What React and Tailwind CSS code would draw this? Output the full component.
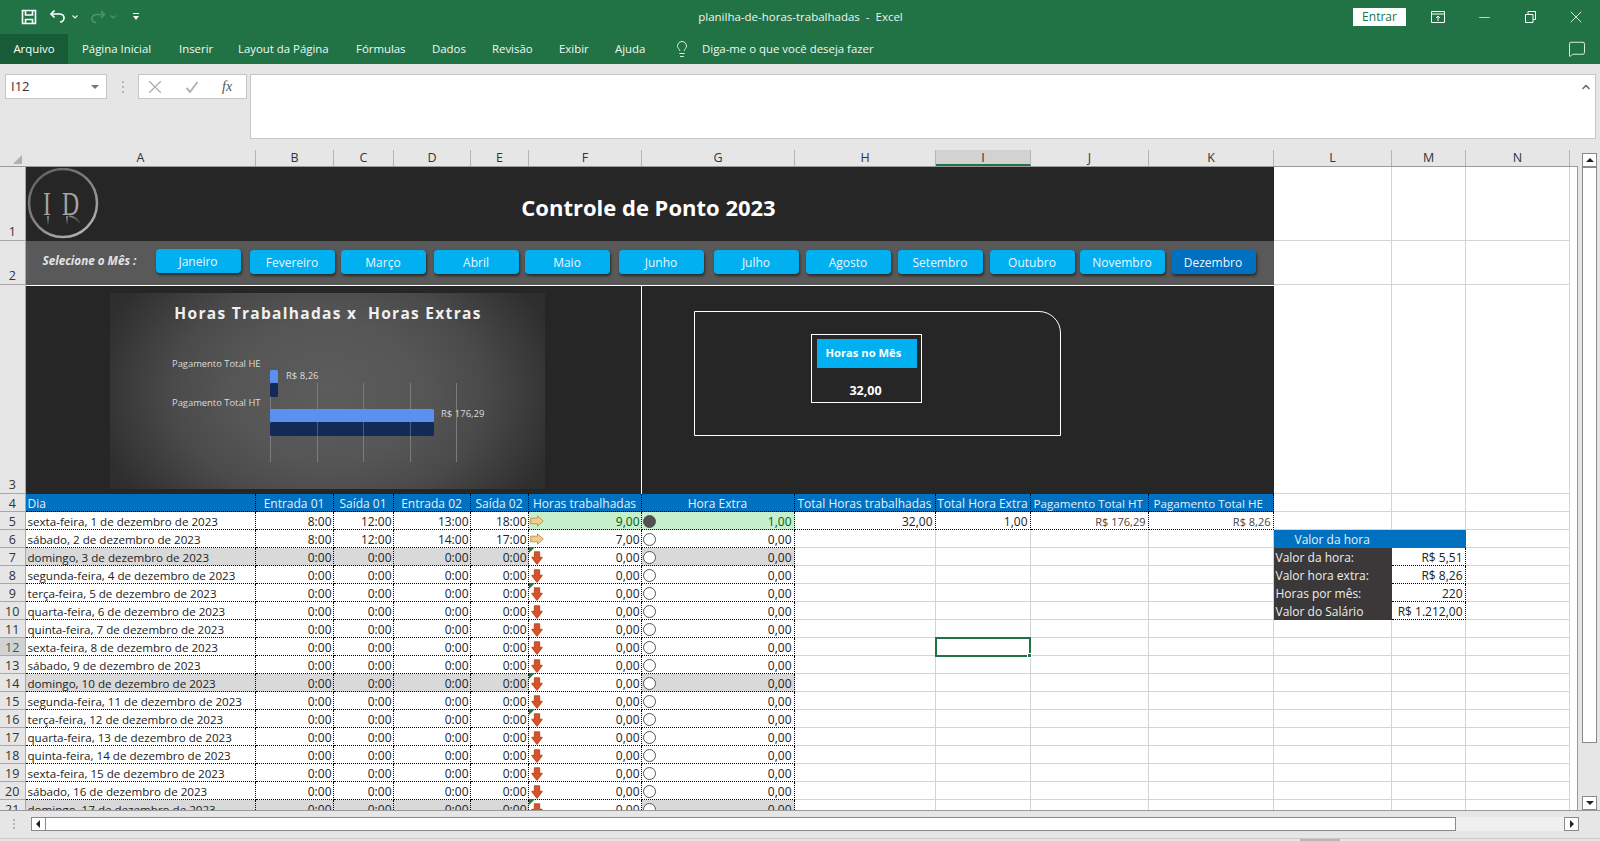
import { ChevronUp, Lightbulb, MessageSquare, Minus, X } from 'lucide-react'

const FONT = 'font-["Open_Sans",sans-serif]'

const TABS = [
  { label: 'Página Inicial', cls: 'ml-[14px] w-[70px]' },
  { label: 'Inserir', cls: 'ml-[27px] w-[32px]' },
  { label: 'Layout da Página', cls: 'ml-[27px] w-[91px]' },
  { label: 'Fórmulas', cls: 'ml-[27px] w-[49px]' },
  { label: 'Dados', cls: 'ml-[27px] w-[33px]' },
  { label: 'Revisão', cls: 'ml-[27px] w-[40px]' },
  { label: 'Exibir', cls: 'ml-[27px] w-[29px]' },
  { label: 'Ajuda', cls: 'ml-[27px] w-[31px]' },
]

const COLUMNS = [
  { label: 'A', w: 'w-[230px]' },
  { label: 'B', w: 'w-[78px]' },
  { label: 'C', w: 'w-[60px]' },
  { label: 'D', w: 'w-[77px]' },
  { label: 'E', w: 'w-[58px]' },
  { label: 'F', w: 'w-[113px]' },
  { label: 'G', w: 'w-[153px]' },
  { label: 'H', w: 'w-[141px]' },
  { label: 'I', w: 'w-[95px]', selected: true },
  { label: 'J', w: 'w-[118px]' },
  { label: 'K', w: 'w-[125px]' },
  { label: 'L', w: 'w-[118px]' },
  { label: 'M', w: 'w-[74px]' },
  { label: 'N', w: 'w-[104px]' },
]

const MONTHS = [
  { label: 'Janeiro', cls: 'ml-[18px] -translate-y-[1px]' },
  { label: 'Fevereiro', cls: 'ml-[9px]' },
  { label: 'Março', cls: 'ml-[6px]' },
  { label: 'Abril', cls: 'ml-[8px]' },
  { label: 'Maio', cls: 'ml-[6px]' },
  { label: 'Junho', cls: 'ml-[9px]' },
  { label: 'Julho', cls: 'ml-[10px]' },
  { label: 'Agosto', cls: 'ml-[7px]' },
  { label: 'Setembro', cls: 'ml-[7px]' },
  { label: 'Outubro', cls: 'ml-[7px]' },
  { label: 'Novembro', cls: 'ml-[5px]' },
  { label: 'Dezembro', cls: 'ml-[6px]', active: true },
]

const WEEK = ['sexta-feira', 'sábado', 'domingo', 'segunda-feira', 'terça-feira', 'quarta-feira', 'quinta-feira']

// rows 5..21 of the sheet, one per day of december
const DAYS = Array.from({ length: 17 }, (_, i) => ({
  row: i + 5,
  name: `${WEEK[i % 7]}, ${i + 1} de dezembro de 2023`,
  sunday: i % 7 === 2,
  times: i === 0 ? ['8:00', '12:00', '13:00', '18:00'] : i === 1 ? ['8:00', '12:00', '14:00', '17:00'] : ['0:00', '0:00', '0:00', '0:00'],
  hours: i === 0 ? '9,00' : i === 1 ? '7,00' : '0,00',
  extra: i === 0 ? '1,00' : '0,00',
  flag: [2, 4, 9, 11, 16].includes(i),
}))

const DOTTED = 'border-r border-b border-dotted border-black'
const PLAIN = 'border-r border-b border-[#d4d4d4]'

function ArrowDownIcon() {
  return (
    <svg width="12" height="14" viewBox="0 0 12 14" className="ml-[1px] mt-[2px] shrink-0">
      <path d="M3.500 1h5v5.500h2.500L6 13 1 6.500h2.500z" fill="#d2552c" stroke="#cc4f27" strokeWidth="1.300" strokeLinejoin="round" />
    </svg>
  )
}

function ArrowRightIcon() {
  return (
    <svg width="14" height="12" viewBox="0 0 14 12" className="mt-[1px] shrink-0">
      <path d="M.7 3.200h6.800V.8l5.800 5.200-5.800 5.200V8.800H.7z" fill="#efcd8f" stroke="#c9964a" strokeWidth="1" strokeLinejoin="round" />
    </svg>
  )
}

function Ball({ filled }) {
  return <span className={`mt-[1px] size-[13px] shrink-0 rounded-full border border-[#555] ${filled ? 'bg-[#505050]' : 'bg-white'}`} />
}

function SmallChevron({ color, cls }) {
  return (
    <svg width="6" height="4" viewBox="0 0 6 4" className={cls} fill="none" stroke={color} strokeWidth="1.200">
      <path d="M.5.5 3 3 5.500.5" />
    </svg>
  )
}

function TitleBar() {
  return (
    <div className="flex h-[34px] items-center text-white">
      <svg width="16" height="16" viewBox="0 0 16 16" className="ml-[21px]" fill="none" stroke="#fff" strokeWidth="1.600">
        <path d="M1.500 1.500h13v13h-13z" />
        <path d="M4.500 1.500v4.500h7V1.500M4.500 14.500v-4h7v4" />
      </svg>
      <svg width="17" height="16" viewBox="0 0 17 16" className="ml-[12px]" fill="none" stroke="#fff" strokeWidth="1.700">
        <path d="M5.500 1.500 2 5l3.500 3.500" />
        <path d="M2.500 5H10c3.600 0 5 2 5 4s-1.500 4-4 4" />
      </svg>
      <SmallChevron color="#e6f0ea" cls="ml-[6px]" />
      <svg width="16" height="16" viewBox="0 0 16 16" className="ml-[12px]" fill="none" stroke="#4f9470" strokeWidth="1.600">
        <path d="M11 2l3.500 3.500L11 9" />
        <path d="M13.500 5.500H7c-3.400 0-5 2-5 4s1.500 4 4 4" />
      </svg>
      <SmallChevron color="#4f9470" cls="ml-[4px]" />
      <svg width="6" height="8" viewBox="0 0 6 8" className="ml-[17px]" fill="#fff">
        <path d="M0 0h6v1H0zM0 3h6L3 7z" />
      </svg>
      <div className={`flex-1 whitespace-pre pl-[109px] text-center text-[11.500px] text-[#eef5f0] ${FONT}`}>
        planilha-de-horas-trabalhadas  -  Excel
      </div>
      <div className={`flex h-[18px] w-[53px] items-center justify-center bg-white text-[12px] text-[#217346] ${FONT}`}>Entrar</div>
      <div className="flex w-[194px] items-center">
        <svg width="14" height="12" viewBox="0 0 14 12" className="ml-[25px]" fill="none" stroke="#fff">
          <path d="M.5.5h13v11H.5zM.5 3h13M7 10V5M5 7l2-2 2 2" />
        </svg>
        <Minus size={17} strokeWidth={1} className="ml-[31px]" />
        <svg width="11" height="12" viewBox="0 0 11 12" className="ml-[32px]" fill="none" stroke="#fff">
          <path d="M.5 3.500h7.500v8H.500zM3 3.500V.5h7.500v8H8" />
        </svg>
        <X size={20} strokeWidth={1} className="ml-[30px]" />
      </div>
    </div>
  )
}

function Ribbon() {
  return (
    <div className={`flex h-[30px] items-center text-[11.400px] text-[#f2f7f4] ${FONT}`}>
      <div className="flex h-full w-[68px] items-center justify-center bg-[#185c37] text-white">Arquivo</div>
      {TABS.map((t) => (
        <span key={t.label} className={`whitespace-nowrap ${t.cls}`}>{t.label}</span>
      ))}
      <Lightbulb size={18} strokeWidth={1.200} className="ml-[27px]" />
      <span className="ml-[11px] whitespace-nowrap">Diga-me o que você deseja fazer</span>
      <div className="flex-1" />
      <MessageSquare size={18} strokeWidth={1.200} className="mr-[14px]" />
    </div>
  )
}

function FormulaBar() {
  return (
    <div className="flex h-[86px] bg-[#e6e6e6] pt-[10px]">
      <div className={`ml-[5px] flex h-[25px] w-[102px] items-center justify-between border border-[#c6c6c6] bg-white pl-[5px] pr-[7px] text-[13px] text-[#333] ${FONT}`}>
        I12
        <span className="h-0 w-0 border-x-[4px] border-t-[4px] border-x-transparent border-t-[#777]" />
      </div>
      <div className="flex h-[25px] w-[31px] flex-col items-center justify-center gap-[3px]">
        <span className="size-[2px] bg-[#b5b5b5]" />
        <span className="size-[2px] bg-[#b5b5b5]" />
        <span className="size-[2px] bg-[#b5b5b5]" />
      </div>
      <div className="flex h-[25px] w-[109px] items-center border border-[#c6c6c6] bg-white text-[#a8a8a8]">
        <X size={22} strokeWidth={1.200} className="ml-[5px]" />
        <svg width="14" height="14" viewBox="0 0 14 14" className="ml-[19px]" fill="none" stroke="#b4b4b4" strokeWidth="2">
          <path d="M1.500 8l3.500 4L12.500 2" />
        </svg>
        <span className='ml-[23px] font-["Liberation_Serif",serif] text-[14px] italic text-[#555]'>fx</span>
      </div>
      <div className="ml-[3px] flex h-[65px] w-[1346px] justify-end border border-[#c6c6c6] bg-white pr-[3px] pt-[6px]">
        <ChevronUp size={12} strokeWidth={3} className="text-[#666]" />
      </div>
    </div>
  )
}

function ColumnHeaders() {
  return (
    <div className={`flex h-[16px] bg-[#e6e6e6] text-[12.500px] leading-[15px] text-[#333] ${FONT}`}>
      <div className="relative w-[25.500px] shrink-0">
        <span className="absolute bottom-[2px] right-[4px] h-0 w-0 border-b-[9px] border-l-[9px] border-b-[#b0b0b0] border-l-transparent" />
      </div>
      {COLUMNS.map((c) => (
        <div
          key={c.label}
          className={`shrink-0 border-r border-[#b4b4b4] pl-[1px] text-center ${c.w} ${c.selected ? 'border-b-2 border-b-[#217346] bg-[#d2d2d2]' : ''}`}
        >
          {c.label}
        </div>
      ))}
    </div>
  )
}

function RowHead({ n, h = 'h-[18px]', end, selected }) {
  return (
    <div
      className={`flex w-[25.500px] shrink-0 justify-center border-b border-r border-[#a8a8a8] text-[12.500px] ${end ? 'items-end leading-[16px]' : 'items-center pt-[2px]'} ${h} ${selected ? 'bg-[#d2d2d2] text-[#1e6b41]' : 'bg-[#e6e6e6] text-[#333]'}`}
    >
      {n}
    </div>
  )
}

function Logo() {
  return (
    <svg width="72" height="72" viewBox="0 0 72 72" className="ml-[1px] mt-[1px] shrink-0">
      <defs>
        <linearGradient id="logoRing" x1="0" y1="0" x2="0.7" y2="1">
          <stop offset="0" stopColor="#5c5c5c" />
          <stop offset="0.6" stopColor="#868686" />
          <stop offset="1" stopColor="#b0b0b0" />
        </linearGradient>
        <linearGradient id="logoFade" x1="0" y1="0" x2="0" y2="1">
          <stop offset="0" stopColor="#8a8a8a" />
          <stop offset="1" stopColor="#262626" />
        </linearGradient>
      </defs>
      <circle cx="36" cy="35" r="34" fill="#262626" stroke="url(#logoRing)" strokeWidth="2.500" />
      <g fontFamily="Liberation Serif, serif" fontSize="34" fill="#a4a4a4">
        <text transform="translate(16 47) scale(0.7 1)">I</text>
        <text transform="translate(35 47) scale(0.7 1)">D</text>
      </g>
      <rect x="20" y="48" width="2" height="9" fill="url(#logoFade)" />
      <rect x="39" y="48" width="2" height="9" fill="url(#logoFade)" />
      <path d="M42 48c6 1 9 3 11 8" fill="none" stroke="url(#logoFade)" strokeWidth="1.500" />
    </svg>
  )
}

function MonthButton({ label, cls, active }) {
  return (
    <div
      className={`flex h-[24px] w-[85px] shrink-0 items-center justify-center rounded-[4px] text-[12px] text-[#eaf7ff] shadow-[1px_2px_3px_rgba(0,0,0,0.55)] ${cls} ${active ? 'bg-[#0070c0]' : 'bg-[#00b0f0]'}`}
    >
      {label}
    </div>
  )
}

function Chart() {
  return (
    <div className="ml-[84px] mt-[7px] h-[196px] w-[435px] bg-[radial-gradient(ellipse_55%_90%_at_center,#5c5c5c_0%,#565656_40%,#4a4a4a_65%,#2e2e2e_100%)]">
      <svg width="435" height="196" viewBox="0 0 435 196" fontFamily="Open Sans, sans-serif">
        <text x="218" y="26" textAnchor="middle" fontSize="15.500" fontWeight="700" letterSpacing="1.300" fill="#f0f0f0">Horas Trabalhadas x {'\u00a0'}Horas Extras</text>
        <text x="62" y="74" fontSize="9.400" fill="#dcdcdc">Pagamento Total HE</text>
        <text x="62" y="113" fontSize="9.400" fill="#dcdcdc">Pagamento Total HT</text>
        {[160, 207, 253, 300, 346].map((x) => (
          <line key={x} x1={x + 0.5} x2={x + 0.5} y1="90" y2="169" stroke="#7c7c7c" />
        ))}
        <rect x="160" y="77" width="8" height="13" rx="1.500" fill="#5b8ff0" />
        <rect x="160" y="90" width="8" height="14" rx="1.500" fill="#122a58" />
        <rect x="160" y="116" width="164" height="13" rx="1.500" fill="#5b8ff0" />
        <rect x="160" y="129" width="164" height="14" rx="1.500" fill="#122a58" />
        {[207, 253, 300].map((x) => (
          <line key={x} x1={x + 0.5} x2={x + 0.5} y1="129" y2="143" stroke="#4a5a78" />
        ))}
        <text x="176" y="86" fontSize="9.500" fill="#dcdcdc">R$ 8,26</text>
        <text x="331" y="124" fontSize="9.500" fill="#dcdcdc">R$ 176,29</text>
      </svg>
    </div>
  )
}

function Card() {
  return (
    <div className="ml-[52px] mt-[25px] h-[125px] w-[367px] rounded-tr-[22px] border border-white pl-[116px] pt-[22px]">
      <div className="h-[69px] w-[111px] border border-white p-[4px] pl-[5px]">
        <div className="flex h-[29px] items-center bg-[#00b0f0] pb-[2px] pl-[9px] text-[11.200px] font-bold text-white">Horas no Mês</div>
        <div className="pr-[2px] pt-[13px] text-center text-[12.500px] font-bold text-white">32,00</div>
      </div>
    </div>
  )
}

function Banner() {
  return (
    <div className="flex">
      {/* merged A1:K3 plus the empty L,M,N cells at its side */}
      <div>
        <div className="flex">
          <RowHead n="1" h="h-[74px]" end />
          <div className="flex h-[74px] w-[1248px] bg-[#262626]">
            <Logo />
            <div className="ml-[292px] w-[516px] pt-[25px] text-center text-[22px] font-bold leading-[30px] text-white">Controle de Ponto 2023</div>
          </div>
        </div>
        <div className="flex">
          <RowHead n="2" h="h-[44px]" end />
          <div className="flex h-[44px] w-[1248px] items-center bg-[#595959] pb-[2px]">
            <span className="mb-[4px] ml-[17px] w-[95px] whitespace-nowrap text-[11.700px] font-bold italic text-[#e4e4e4]">Selecione o Mês :</span>
            {MONTHS.map((m) => (
              <MonthButton key={m.label} {...m} />
            ))}
          </div>
        </div>
        <div className="flex">
          <RowHead n="3" h="h-[209px]" end />
          <div className="flex h-[209px] w-[1248px] border-t border-white bg-[#262626]">
            <div className="h-full w-[616px] border-r border-white">
              <Chart />
            </div>
            <Card />
          </div>
        </div>
      </div>
      <div className="flex">
        {['w-[118px]', 'w-[74px]', 'w-[104px]'].map((w) => (
          <div key={w} className={w}>
            <div className={`h-[74px] ${PLAIN}`} />
            <div className={`h-[44px] ${PLAIN}`} />
            <div className={`h-[209px] ${PLAIN}`} />
          </div>
        ))}
      </div>
    </div>
  )
}

function HeaderRow() {
  const cols = [
    ['Entrada 01', 'w-[78px]'],
    ['Saída 01', 'w-[60px]'],
    ['Entrada 02', 'w-[77px]'],
    ['Saída 02', 'w-[58px]'],
    ['Horas trabalhadas', 'w-[113px]'],
    ['Hora Extra', 'w-[153px]'],
    ['Total Horas trabalhadas', 'w-[141px]'],
    ['Total Hora Extra', 'w-[95px]'],
  ]
  return (
    <div className="flex h-[18px]">
      <RowHead n="4" />
      <div className={`w-[230px] bg-[#0070c0] pl-[2px] text-[#e3f1fb] ${DOTTED}`}>Dia</div>
      {cols.map(([label, w]) => (
        <div key={label} className={`whitespace-nowrap bg-[#0070c0] text-center text-[#e3f1fb] ${w} ${DOTTED}`}>{label}</div>
      ))}
      <div className={`w-[118px] whitespace-nowrap bg-[#0070c0] pl-[3px] text-[11.600px] text-[#e3f1fb] ${DOTTED}`}>Pagamento Total HT</div>
      <div className={`w-[125px] whitespace-nowrap bg-[#0070c0] pl-[5px] text-[11.600px] text-[#e3f1fb] ${DOTTED}`}>Pagamento Total HE</div>
      <div className={`w-[118px] ${PLAIN}`} />
      <div className={`w-[74px] ${PLAIN}`} />
      <div className={`w-[104px] ${PLAIN}`} />
    </div>
  )
}

function SideCells({ row }) {
  // block "Valor da hora" sits over L6:M10, everything else is an empty cell
  const side = {
    6: { head: 'Valor da hora' },
    7: { label: 'Valor da hora:', value: 'R$ 5,51' },
    8: { label: 'Valor hora extra:', value: 'R$ 8,26' },
    9: { label: 'Horas por mês:', value: '220' },
    10: { label: 'Valor do Salário', value: 'R$ 1.212,00' },
  }[row]
  return (
    <>
      {side?.head ? (
        <div className="w-[192px] bg-[#0070c0] pl-[21px] text-[#e3f1fb]">{side.head}</div>
      ) : side ? (
        <>
          <div className="w-[118px] bg-[#3a3838] pl-[2px] text-[#eeeeee]">{side.label}</div>
          <div className={`w-[74px] whitespace-nowrap pr-[2px] text-right text-[#222] ${DOTTED}`}>{side.value}</div>
        </>
      ) : (
        <>
          <div className={`w-[118px] ${PLAIN}`} />
          <div className={`w-[74px] ${PLAIN}`} />
        </>
      )}
      <div className={`w-[104px] ${PLAIN}`} />
    </>
  )
}

function DayRow({ day }) {
  const bg = day.sunday ? 'bg-[#d9d9d9]' : 'bg-white'
  const first = day.row === 5
  const tailCells = first
    ? [['32,00', 'w-[141px]', 'text-[#222]'], ['1,00', 'w-[95px]', 'text-[#222]'], ['R$ 176,29', 'w-[118px]', 'text-[11px] text-[#444]'], ['R$ 8,26', 'w-[125px]', 'text-[11px] text-[#444]']]
    : null
  const hoursClass = first ? 'bg-[#c6efce] text-[#006100]' : 'bg-white text-[#222]'
  const extraClass = first ? 'bg-[#c6efce] text-[#006100]' : `${bg} text-[#222]`
  const selectedRow = day.row === 12

  return (
    <div className="flex h-[18px]">
      <RowHead n={day.row} selected={selectedRow} />
      <div className={`w-[230px] whitespace-nowrap pl-[2px] text-[11.600px] text-[#222] ${bg} ${DOTTED}`}>{day.name}</div>
      {day.times.map((t, i) => (
        <div key={i} className={`pr-[1px] text-right text-[#222] ${bg} ${DOTTED} ${['w-[78px]', 'w-[60px]', 'w-[77px]', 'w-[58px]'][i]}`}>{t}</div>
      ))}
      <div className={`relative flex w-[113px] items-center justify-between pl-[1px] pr-[1px] ${hoursClass} ${DOTTED}`}>
        {day.flag && <span className="absolute -top-[1px] left-0 z-10 h-0 w-0 border-b-[6px] border-l-[6px] border-b-transparent border-l-[#1a7f2e]" />}
        {day.hours === '0,00' ? <ArrowDownIcon /> : <ArrowRightIcon />}
        <span className="pt-[2px]">{day.hours}</span>
      </div>
      <div className={`flex w-[153px] items-center justify-between pl-[1px] pr-[2px] ${extraClass} ${DOTTED}`}>
        <Ball filled={first} />
        <span className="pt-[2px]">{day.extra}</span>
      </div>
      {first ? (
        tailCells.map(([v, w, c]) => (
          <div key={w} className={`pr-[2px] text-right ${w} ${c} ${DOTTED}`}>{v}</div>
        ))
      ) : (
        <>
          <div className={`w-[141px] ${PLAIN}`} />
          <div className={`relative w-[95px] ${PLAIN}`}>
            {selectedRow && (
              <div className="absolute -left-[1px] -top-[1px] z-10 h-[20px] w-[96px] border-2 border-[#217346]">
                <span className="absolute -bottom-[3px] -right-[3px] size-[5px] border border-white bg-[#217346]" />
              </div>
            )}
          </div>
          <div className={`w-[118px] ${PLAIN}`} />
          <div className={`w-[125px] ${PLAIN}`} />
        </>
      )}
      <SideCells row={day.row} />
    </div>
  )
}

function Sheet() {
  return (
    <div className={`h-[644px] w-[1578px] overflow-hidden border-r border-t border-[#9a9a9a] bg-white text-[12px] leading-[19px] ${FONT}`}>
      <Banner />
      <HeaderRow />
      {DAYS.map((d) => (
        <DayRow key={d.row} day={d} />
      ))}
    </div>
  )
}

function VerticalScroll() {
  return (
    <div className="flex h-[660px] w-[22px] flex-col items-end bg-[#e6e6e6] pr-[3px] pt-[3px]">
      <div className="flex h-[14px] w-[15px] items-center justify-center border border-[#8a8a8a] bg-white">
        <span className="h-0 w-0 border-x-[4px] border-b-[4px] border-x-transparent border-b-[#222]" />
      </div>
      <div className="h-[576px] w-[15px] border border-[#8a8a8a] bg-white" />
      <div className="flex-1" />
      <div className="flex h-[14px] w-[15px] items-center justify-center border border-[#8a8a8a] bg-white">
        <span className="h-0 w-0 border-x-[4px] border-t-[4px] border-x-transparent border-t-[#222]" />
      </div>
    </div>
  )
}

function BottomBar() {
  return (
    <div className="flex h-[31px] flex-col bg-[#e6e6e6]">
      <div className="flex h-[28px] border-t border-[#9a9a9a] pt-[6px]">
        <div className="ml-[13px] flex h-[14px] flex-col justify-center gap-[2px]">
          <span className="size-[2px] bg-[#b5b5b5]" />
          <span className="size-[2px] bg-[#b5b5b5]" />
          <span className="size-[2px] bg-[#b5b5b5]" />
        </div>
        <div className="ml-[15.500px] flex h-[14px] w-[15px] items-center justify-center border border-[#8a8a8a] bg-white">
          <span className="h-0 w-0 border-y-[4px] border-r-[4px] border-y-transparent border-r-[#222]" />
        </div>
        <div className="h-[14px] w-[1410px] border border-l-0 border-[#8a8a8a] bg-white" />
        <div className="h-[14px] w-[108.500px] bg-[#f0f0f0]" />
        <div className="flex h-[14px] w-[15px] items-center justify-center border border-[#8a8a8a] bg-white">
          <span className="h-0 w-0 border-y-[4px] border-l-[4px] border-y-transparent border-l-[#222]" />
        </div>
      </div>
      <div className="flex flex-1 border-t border-[#c8c8c8] pl-[1300px]">
        <div className="h-full w-[40px] bg-[#b8b8b8]" />
      </div>
    </div>
  )
}

export default function App() {
  return (
    <div className="h-[841px] w-[1600px] overflow-hidden bg-[#e6e6e6]">
      <div className="bg-[#217346]">
        <TitleBar />
        <Ribbon />
      </div>
      <FormulaBar />
      <div className="flex">
        <div className="w-[1578px]">
          <ColumnHeaders />
          <Sheet />
        </div>
        <VerticalScroll />
      </div>
      <BottomBar />
    </div>
  )
}
